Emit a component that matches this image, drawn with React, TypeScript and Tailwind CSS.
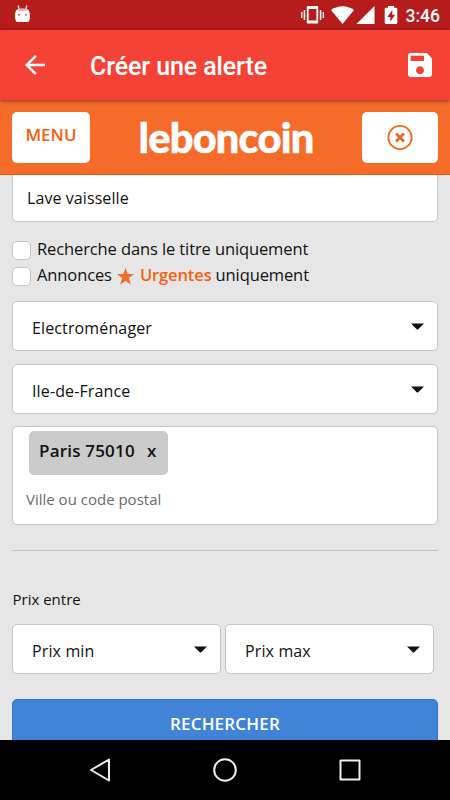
import React, { useState } from 'react';

interface SelectBoxProps {
  label: string;
  className?: string;
}

function SelectBox({ label, className = '' }: SelectBoxProps) {
  return (
    <button
      className={`flex h-[50px] items-center justify-between rounded-[5px] border border-[#c4c4c4] bg-white pl-[19px] pr-[13px] text-left text-[16px] tracking-[0.13px] text-[#111] ${className}`}
    >
      <span className="pt-[3px]">{label}</span>
      <svg className="h-[7px] w-[13px]" viewBox="0 0 13 7">
        <path d="M0 0.4h13L7.500 6Q6.500 7 5.500 6z" fill="#111" />
      </svg>
    </button>
  );
}

function StatusBar() {
  return (
    <div className="flex h-[30px] shrink-0 items-center justify-between bg-[#b71c1c] pl-[14px] pr-[10px] text-white">
      <svg className="h-[20px] w-[17px]" viewBox="0 0 17 20">
        <path d="M4.200 0.500l1 4M12.800 0.500l-1 4" stroke="#fff" strokeOpacity="0.85" strokeWidth="1.300" />
        <path d="M3.500 4.200Q8.500 3 13.500 4.200Q15.500 5 15.800 8.500L16 12Q15.600 17 13.500 17h-10Q1.400 17 1 12L1.200 8.500Q1.500 5 3.500 4.200z" fill="#fff" />
        <path d="M3.500 4h10v1.600Q8.500 7 3.500 5.600z" fill="#e9b5b5" />
        <circle cx="5" cy="9.800" r="1" fill="#c96060" />
        <circle cx="12" cy="9.800" r="1" fill="#c96060" />
      </svg>
      <div className="flex items-center">
        <svg className="h-[20px] w-[23px]" viewBox="0 0 23 20" fill="#fff">
          <path fillRule="evenodd" d="M6.800 1h9.400q1 0 1 1v15.500q0 1-1 1H6.800q-1 0-1-1V2q0-1 1-1zM7.600 4v11.500h7.800V4z" />
          <path d="M0 7h1.400v6H0zM2.700 5h1.500v10H2.700zM18.800 5h1.500v10h-1.500zM21.600 7H23v6h-1.400z" />
        </svg>
        <svg className="ml-[7px] h-[20px] w-[23px]" viewBox="0 0 23 20">
          <path d="M0 5Q11.500-2.500 23 5L11.500 19z" fill="#fff" />
        </svg>
        <svg className="ml-[2px] h-[20px] w-[19px]" viewBox="0 0 19 20">
          <path d="M18.500 1v18H0.500z" fill="#fff" />
        </svg>
        <svg className="ml-[9px] h-[20px] w-[14px]" viewBox="0 0 14 20">
          <path d="M4 1h6v1.800h2q1.300 0 1.300 1.300V17.700Q13.300 19 12 19H2Q0.700 19 0.700 17.700V4.100Q0.700 2.800 2 2.800h2z" fill="#fff" />
          <path d="M8.300 5L3.300 12h3v4.800l4.800-7H8.300z" fill="#b71c1c" />
        </svg>
        <span className="ml-[8px] mt-[1px] font-[Roboto,sans-serif] text-[17.5px] font-medium leading-[30px]">3:46</span>
      </div>
    </div>
  );
}

function AppBar() {
  return (
    <div className="z-10 flex h-[70px] shrink-0 items-center bg-[#f44336] pl-[25px] pr-[18px] text-white shadow-[0_1px_4px_rgba(0,0,0,0.45)]">
      <svg className="h-[20px] w-[20px]" viewBox="4 4 16 16" fill="#fff">
        <path d="M20 11H7.830l5.590-5.590L12 4l-8 8 8 8 1.410-1.410L7.830 13H20v-2z" />
      </svg>
      <h1 className="ml-[45px] mt-[3px] font-[Roboto,sans-serif] text-[25px] font-medium tracking-[-0.1px]">Créer une alerte</h1>
      <svg className="ml-auto h-[24px] w-[24px]" viewBox="3 3 18 18" fill="#fff">
        <path d="M17 3H5c-1.110 0-2 .9-2 2v14c0 1.100.89 2 2 2h14c1.100 0 2-.9 2-2V7l-4-4zm-5 16c-1.660 0-3-1.340-3-3s1.340-3 3-3 3 1.340 3 3-1.340 3-3 3zm3-10H5V5h10v4z" />
      </svg>
    </div>
  );
}

function SiteHeader() {
  return (
    <div className="flex h-[75px] shrink-0 items-center justify-between border-b border-[#f9530a] bg-[#f56b2a] pl-[12px] pr-[12px]">
      <button className="h-[51px] w-[78px] rounded-[5px] bg-white pb-[5px] text-[17px] font-semibold text-[#f4600f]">
        MENU
      </button>
      <span className="mt-[1px] whitespace-nowrap font-[Lato,sans-serif] text-[41.5px] font-black leading-none tracking-[-0.8px] text-white [-webkit-text-stroke:0.5px_#fff]">
        leboncoin
      </span>
      <button className="flex h-[51px] w-[76px] items-center justify-center rounded-[5px] bg-white">
        <svg className="h-[26px] w-[26px]" viewBox="0 0 26 26" fill="none" stroke="#f4661f">
          <circle cx="13" cy="13.500" r="11.600" strokeWidth="1.900" />
          <path d="M9 9.500l8 8M17 9.500l-8 8" strokeWidth="2.600" />
        </svg>
      </button>
    </div>
  );
}

export default function App() {
  const [keywords, setKeywords] = useState('Lave vaisselle');
  const [city, setCity] = useState('');

  return (
    <div className="flex h-[800px] w-[450px] flex-col overflow-hidden bg-[#e6e6e6] font-['Open_Sans',sans-serif] text-[#111]">
      <StatusBar />
      <AppBar />
      <SiteHeader />

      <main className="flex h-[565px] shrink-0 flex-col overflow-hidden pl-[12px] pr-[12px]">
        <input
          type="text"
          value={keywords}
          onChange={(e) => setKeywords(e.target.value)}
          className="h-[47px] w-full shrink-0 rounded-b-[5px] border border-t-0 border-[#c8c8c8] bg-white pl-[14px] text-[16px] tracking-[0.08px] outline-none"
        />

        <div className="mt-[14px] flex flex-col text-[16.5px] tracking-[-0.11px]">
          <label className="flex h-[26px] items-center">
            <span className="mt-[3px] h-[19px] w-[19px] rounded-[5px] border border-[#c4c4c4] bg-white" />
            <span className="ml-[6px]">Recherche dans le titre uniquement</span>
          </label>
          <label className="flex h-[26px] items-center">
            <span className="mt-[3px] h-[19px] w-[19px] rounded-[5px] border border-[#c4c4c4] bg-white" />
            <span className="ml-[6px]">Annonces</span>
            <svg className="ml-[5px] mt-[3px] h-[17px] w-[17px]" viewBox="0 0 17 17" fill="#f56b2a">
              <path d="M8.500 0l2.200 6H17l-5.100 4 1.900 6.700-5.300-3.900-5.300 3.900L5.100 10 0 6h6.300z" />
            </svg>
            <span className="ml-[6px] font-semibold text-[#f4600f]">Urgentes</span>
            <span className="ml-[4px]">uniquement</span>
          </label>
        </div>

        <SelectBox label="Electroménager" className="mt-[13px] shrink-0" />
        <SelectBox label="Ile-de-France" className="mt-[13px] shrink-0" />

        <div className="mt-[12px] h-[99px] shrink-0 rounded-[5px] border border-[#c4c4c4] bg-white">
          <div className="ml-[16px] mt-[4px] flex h-[44px] w-[139px] rounded-[5px] bg-[#cbcbcb] pl-[10px] pt-[8px] text-[17px] font-semibold leading-[24px] tracking-[0.2px] text-[#111]">
            <span>Paris 75010</span>
            <span className="ml-[12px]">x</span>
          </div>
          <input
            type="text"
            value={city}
            onChange={(e) => setCity(e.target.value)}
            placeholder="Ville ou code postal"
            className="mt-[13px] w-full pl-[13px] text-[15px] outline-none placeholder:text-[#6a6a6a]"
          />
        </div>

        <hr className="mt-[25px] shrink-0 border-[#c1c1c1]" />

        <p className="mt-[36px] pl-[0.5px] text-[15px] leading-[24px]">Prix entre</p>
        <div className="mt-[13px] flex gap-[4px]">
          <SelectBox label="Prix min" className="w-[209px]" />
          <SelectBox label="Prix max" className="w-[209px]" />
        </div>

        <button className="mt-[25px] h-[50px] shrink-0 rounded-[5px] border border-[#2b78cf] bg-[#4183d7] text-[17px] font-semibold tracking-[0.2px] text-white">
          RECHERCHER
        </button>
      </main>

      <nav className="flex h-[60px] shrink-0 items-center justify-between bg-black pl-[88px] pr-[88px]">
        <svg className="h-[24px] w-[24px]" viewBox="0 0 24 24" fill="none" stroke="#eee" strokeWidth="2" strokeLinejoin="round">
          <path d="M21 1.500v21L3 12z" />
        </svg>
        <svg className="h-[24px] w-[24px]" viewBox="0 0 24 24" fill="none" stroke="#eee" strokeWidth="2">
          <circle cx="12" cy="12" r="10.800" />
        </svg>
        <svg className="h-[24px] w-[24px]" viewBox="0 0 24 24" fill="none" stroke="#eee" strokeWidth="2" strokeLinejoin="round">
          <path d="M2.500 2.500h19v19h-19z" />
        </svg>
      </nav>
    </div>
  );
}
